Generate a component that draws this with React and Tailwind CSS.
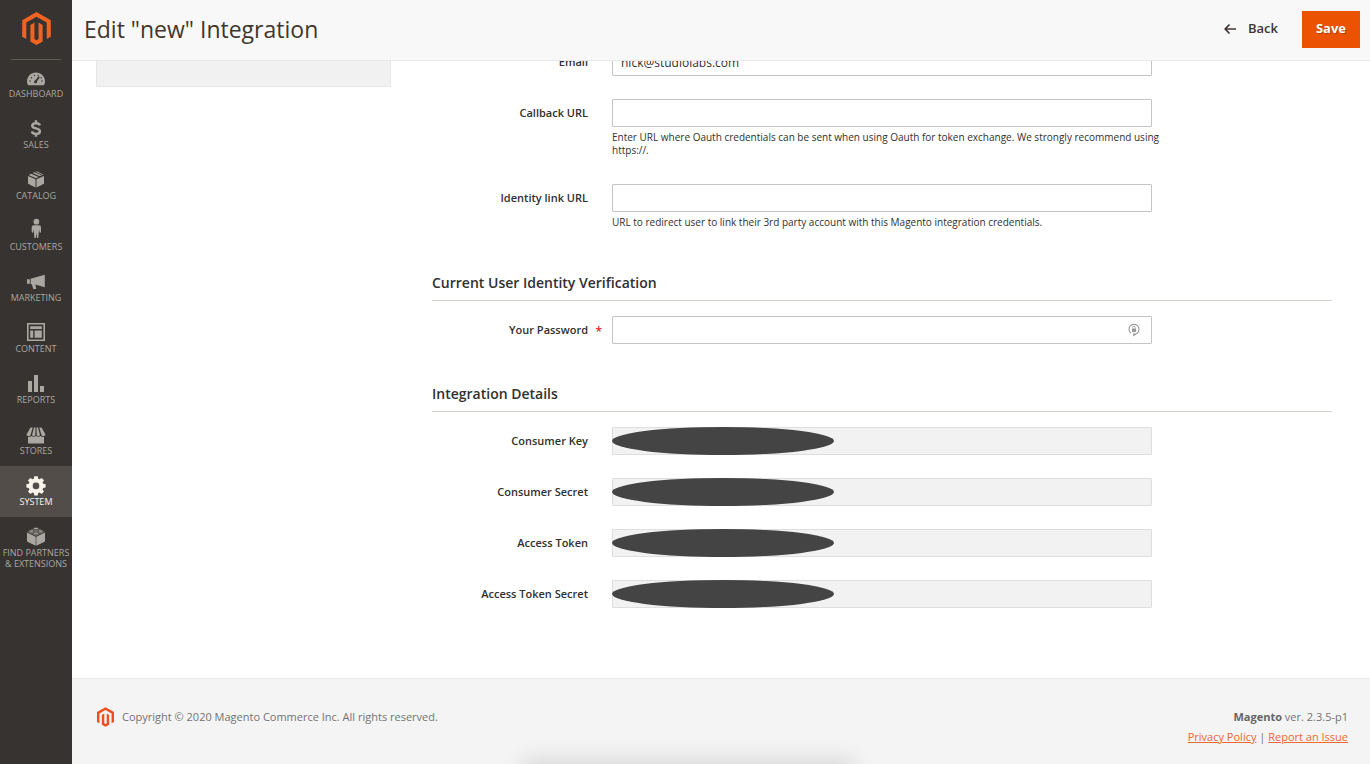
import { useState } from 'react'

const menuItems = [
  { label: 'Dashboard', icon: 'dashboard' },
  { label: 'Sales', icon: 'sales' },
  { label: 'Catalog', icon: 'catalog' },
  { label: 'Customers', icon: 'customers' },
  { label: 'Marketing', icon: 'marketing' },
  { label: 'Content', icon: 'content' },
  { label: 'Reports', icon: 'reports' },
  { label: 'Stores', icon: 'stores' },
  { label: 'System', icon: 'system', active: true },
  { label: 'Find Partners & Extensions', icon: 'partners' },
]

const details = [
  { id: 'consumer-key', label: 'Consumer Key' },
  { id: 'consumer-secret', label: 'Consumer Secret' },
  { id: 'access-token', label: 'Access Token' },
  { id: 'access-token-secret', label: 'Access Token Secret' },
]

const icons = {
  dashboard: (
    <>
      <path fill="currentColor" d="M2.200 17.200C1.500 16.200 1 14.800 1 13.400 1 8.500 5 4.500 10 4.500s9 4 9 8.900c0 1.400-.5 2.800-1.200 3.800z" />
      <path stroke="#373330" strokeWidth="1.700" strokeLinecap="round" d="M9.700 13.600 12.800 9.200" />
      <circle cx="9.600" cy="13.800" r="1.500" fill="#373330" />
      <g fill="#373330">
        <circle cx="4" cy="13" r=".7" />
        <circle cx="5.400" cy="9.700" r=".7" />
        <circle cx="8.500" cy="7.400" r=".7" />
        <circle cx="12" cy="7.200" r=".6" />
        <circle cx="15" cy="9.700" r=".7" />
        <circle cx="16" cy="13" r=".7" />
      </g>
    </>
  ),
  sales: (
    <path
      stroke="currentColor"
      strokeWidth="2.500"
      d="M13.900 6.300C13.400 4.800 12 4.200 10 4.200c-2.200 0-3.700 1-3.700 2.500 0 1.700 1.500 2.200 3.700 2.700 2.300.5 3.900 1.100 3.900 2.900 0 1.700-1.600 2.600-3.900 2.600-2.200 0-3.700-.8-4.200-2.500M10 1.300v3M10 14.500v3.200"
    />
  ),
  catalog: (
    <g fill="currentColor">
      <path d="m2 6 7.500 3.200v8.300L2 13.800zM18 6l-7.500 3.200v8.300l7.500-3.700z" />
      <path d="M2.600 5 5.200 3.700l7.300 3.200L10 8.200zM6.600 3.100l1.900-.9 7.200 3.100-1.800.9zM9.800 1.700 10.800 1.200 17.500 4.600l-.6.3z" />
    </g>
  ),
  customers: (
    <g fill="currentColor">
      <circle cx="10.400" cy="0.700" r="2.900" />
      <path d="M8 4.300h4.800c1.400 0 2.200.9 2.200 2.200v4.400c0 1-1.500 1-1.500 0L13 8.500l-.7 8.500h-1.300l-.6-5-.6 5H8.400l-.7-8.500-.5 2.400c0 1-1.500 1-1.500 0V6.500c0-1.300.9-2.200 2.300-2.200z" />
    </g>
  ),
  marketing: (
    <path fill="currentColor" d="M1 7.300h2.800v4.500H1zM4.600 6.700 18.800 2.800v12.400l-9.500-2.700 1 4.300-2.900.5-1.600-5-1.200-.4z" />
  ),
  content: (
    <>
      <path stroke="currentColor" strokeWidth="1.600" d="M1.800.8h16.400v16.400H1.800z" />
      <path fill="currentColor" d="M4.200 3.200h11.600v2.700H4.200zM4.200 7.400h3v7.400h-3zM8.600 7.400h7.200v7.400H8.600z" />
    </>
  ),
  reports: <path fill="currentColor" d="M2 7h4v11H2zM8 1h4v17H8zM14 12h4v6h-4z" />,
  stores: (
    <path
      fill="currentColor"
      d="M4.500 2.500h2.200L4.500 10.300c-.5 1.300-3.700 1-4-.8zM8 2.500h1.500l-.2 7.800c-.4 1.100-2.800 1.100-3.300 0zM10.500 2.500H12l2 7.800c-.5 1.100-2.900 1.100-3.300 0zM13.300 2.500h2.200l4 7c-.3 1.800-3.500 2.100-4 .8zM2 11.700c1.200.2 2.400-.1 3.200-.8 1.200 1 3.500 1 4.800 0 1.300 1 3.600 1 4.800 0 .8.700 2 1 3.200.8v6.800H2z"
    />
  ),
  system: (
    <path
      fill="currentColor"
      fillRule="evenodd"
      d="m8.300.3h3.400l.5 2.400 1.300.6 2.100-1.400 2.400 2.400-1.400 2.100.6 1.300 2.400.5v3.400l-2.400.5-.6 1.300 1.400 2.100-2.400 2.400-2.100-1.400-1.300.6-.5 2.400H8.300l-.5-2.400-1.300-.6-2.100 1.400L2 15.500l1.400-2.100-.6-1.300-2.400-.5V8.200l2.400-.5.6-1.300L2 4.300l2.400-2.400 2.100 1.400 1.300-.6zM10 6.600a3.300 3.300 0 1 0 0 6.600 3.300 3.300 0 0 0 0-6.600z"
    />
  ),
  partners: (
    <>
      <path fill="currentColor" d="m1 5.500 8.700 4.300v9L1 14.500zM19 5.500l-8.700 4.300v9l8.700-4.300z" />
      <path fill="currentColor" d="M10 .7 18.500 4.800 10 9 1.500 4.800z" />
      <g fill="currentColor" stroke="#373330" strokeWidth=".7">
        <path d="M7.400 1.600v1.300c0 1.600 5.200 1.600 5.200 0V1.600" />
        <ellipse cx="10" cy="1.500" rx="2.600" ry="1.200" />
        <path d="M2.900 4v1.300c0 1.600 5.200 1.600 5.200 0V4" />
        <ellipse cx="5.500" cy="4" rx="2.600" ry="1.200" />
        <path d="M11.900 4v1.300c0 1.600 5.200 1.600 5.200 0V4" />
        <ellipse cx="14.500" cy="4" rx="2.600" ry="1.200" />
        <path d="M7.400 6.300v1.300c0 1.600 5.200 1.600 5.200 0V6.300" />
        <ellipse cx="10" cy="6.300" rx="2.600" ry="1.200" />
      </g>
    </>
  ),
}

function MagentoLogo({ className }) {
  return (
    <svg viewBox="1.600 0 20.800 24" fill="currentColor" className={className} aria-hidden="true">
      <path d="M12 24l-4.455-2.572v-12l2.970-1.715v12.001l1.485.902 1.485-.902V7.713l2.971 1.715v12L12 24zM22.391 6v12l-2.969 1.714V7.713L12 3.430 4.574 7.713v12.001L1.609 18V6L12 0l10.391 6z" />
    </svg>
  )
}

function Sidebar() {
  return (
    <aside className="w-[72px] shrink-0 bg-[#373330]">
      <a href="#" aria-label="Magento Admin" className="mx-[11px] flex h-15 justify-center border-b border-[#5f5a50] pt-3 text-[#f26322]">
        <MagentoLogo className="h-[33px] w-[29px]" />
      </a>
      <nav className="-mt-0.5">
        {menuItems.map((item) => (
          <a
            key={item.label}
            href="#"
            className={`flex min-h-[51px] flex-col items-center pt-2.5 text-center text-[9px] leading-[11px] uppercase ${item.active ? 'bg-[#524d49] text-[#f7f3eb]' : 'text-[#aaa6a0]'}`}
          >
            <svg viewBox="0 0 20 20" fill="none" className="size-5 overflow-visible" aria-hidden="true">
              {icons[item.icon]}
            </svg>
            {item.label}
          </a>
        ))}
      </nav>
    </aside>
  )
}

function Field({ id, label, note, required, children }) {
  return (
    <div className="flex">
      <label htmlFor={id} className="relative w-1/5 pr-6 text-right text-[11px] leading-7 font-semibold">
        {label}
        {required && <span className="absolute top-0.5 right-2.5 text-[12px] text-[#e22626]">*</span>}
      </label>
      <div className="w-3/5">
        {children}
        {note && <p className="-mr-4 pt-1 text-[10px] leading-[13px]">{note}</p>}
      </div>
    </div>
  )
}

function TextInput(props) {
  return <input {...props} className="block h-7 w-full rounded-[1px] border border-[#c4c4c4] bg-white px-2 text-[12px] outline-none" />
}

function SectionTitle({ children }) {
  return <h2 className="mb-[15px] border-b border-[#d3d3cb] pb-2 text-[14px] leading-[19px] font-semibold">{children}</h2>
}

function App() {
  const [email, setEmail] = useState('nick@studiolabs.com')

  return (
    <div className="flex min-h-screen overflow-hidden bg-white font-['Open_Sans',sans-serif] text-[#303030]">
      <Sidebar />
      <div className="flex min-w-0 flex-1 flex-col">
        <header className="sticky top-0 z-10 flex h-[61px] items-center justify-between border-b border-[#e8e8e8] bg-[#f8f8f8] pr-2.5 pb-0.5 pl-3">
          <h1 className="text-[23px] leading-8 text-[#41362f]">Edit "new" Integration</h1>
          <div className="flex items-center gap-6">
            <button type="button" className="flex items-center gap-3 text-[13px] font-semibold text-[#41362f]">
              <svg viewBox="0 0 12 12" fill="none" stroke="currentColor" strokeWidth="1.700" className="size-3" aria-hidden="true">
                <path d="M12 6H1.500M5.500 1.500 1.200 6l4.300 4.500" />
              </svg>
              Back
            </button>
            <button type="button" className="h-[37px] bg-[#eb5202] px-3.5 text-[13px] font-bold text-white [text-shadow:1px_1px_0_rgba(0,0,0,0.25)]">
              Save
            </button>
          </div>
        </header>

        <main className="-mt-[13px] flex flex-1 pr-[38px] pb-[70px] pl-6">
          <div className="mr-[41px] h-[39px] w-[295px] shrink-0 border border-[#e6e6e6] bg-[#f1f1f1]" />
          <form className="flex-1">
            <div className="space-y-[23px]">
              <Field id="email" label="Email">
                <TextInput id="email" type="text" value={email} onChange={(e) => setEmail(e.target.value)} />
              </Field>
              <Field
                id="callback"
                label="Callback URL"
                note="Enter URL where Oauth credentials can be sent when using Oauth for token exchange. We strongly recommend using https://."
              >
                <TextInput id="callback" type="text" />
              </Field>
              <div className="pt-1">
                <Field
                  id="identity"
                  label="Identity link URL"
                  note="URL to redirect user to link their 3rd party account with this Magento integration credentials."
                >
                  <TextInput id="identity" type="text" />
                </Field>
              </div>
            </div>

            <section className="mt-11">
              <SectionTitle>Current User Identity Verification</SectionTitle>
              <Field id="password" label="Your Password" required>
                <div className="relative">
                  <TextInput id="password" type="password" />
                  <svg viewBox="0 0 12 14" fill="none" className="absolute top-[7px] right-3 h-3.5 w-3 text-[#999]" aria-hidden="true">
                    <path stroke="currentColor" strokeWidth="1.100" d="M3 10.300A5 5 0 1 1 9.200 10.200L6.300 11.500" />
                    <path fill="currentColor" d="M4 5.500h4v3.400H4zM5.200 10l3 1.500-3 2z" />
                    <path stroke="currentColor" strokeWidth=".8" d="M4.800 5.500v-1a1.200 1.200 0 0 1 2.400 0v1" />
                  </svg>
                </div>
              </Field>
            </section>

            <section className="mt-10">
              <SectionTitle>Integration Details</SectionTitle>
              <div className="space-y-[23px]">
                {details.map((item) => (
                  <Field key={item.id} id={item.id} label={item.label}>
                    <div className="relative">
                      <input id={item.id} type="text" readOnly className="block h-7 w-full rounded-[1px] border border-[#dedede] bg-[#f2f2f2] px-2 text-[12px] outline-none" />
                      <span className="absolute inset-y-0 left-0 w-[222px] rounded-[50%] bg-[#444]" />
                    </div>
                  </Field>
                ))}
              </div>
            </section>
          </form>
        </main>

        <footer className="relative flex min-h-[86px] justify-between overflow-hidden border-t border-[#e9e9e9] bg-[#f4f4f4] pt-7 pr-[22px] pl-[25px] text-[11px] leading-5 text-[#737373]">
          <p className="flex items-start gap-2">
            <MagentoLogo className="h-5 w-[17px] text-[#f04e1f]" />
            Copyright © 2020 Magento Commerce Inc. All rights reserved.
          </p>
          <div className="text-right">
            <p>
              <strong className="font-bold text-[#666]">Magento</strong> ver. 2.3.5-p1
            </p>
            <p>
              <a href="#" className="text-[#ef672f] underline">Privacy Policy</a> |{' '}
              <a href="#" className="text-[#ef672f] underline">Report an Issue</a>
            </p>
          </div>
          <div className="absolute top-full left-[35%] h-4 w-[325px] shadow-[0_0_22px_4px_rgba(0,0,0,0.12)]" />
        </footer>
      </div>
    </div>
  )
}

export default App
